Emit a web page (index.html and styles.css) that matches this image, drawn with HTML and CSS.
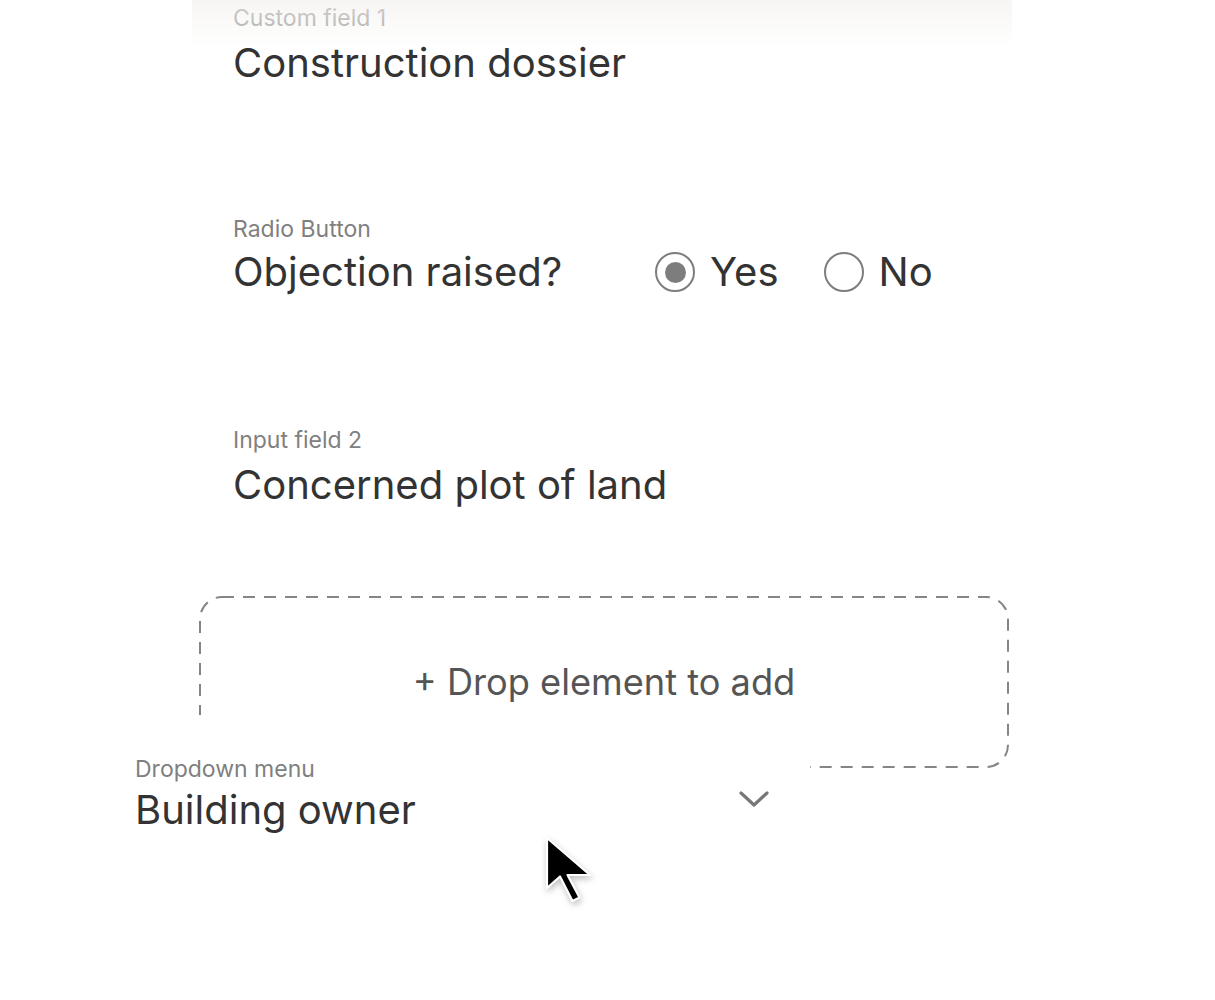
FILE: index.html
```html
<!DOCTYPE html>
<html>
<head>
<meta charset="utf-8">
<link rel="stylesheet" href="styles.css">
</head>
<body>
<div class="page">
  <div class="form">
    <div class="fade"></div>
    <div class="field">
      <div class="label label-faded">Custom field 1</div>
      <div class="value">Construction dossier</div>
    </div>
    <div class="field">
      <div class="label">Radio Button</div>
      <div class="radio-row">
        <div class="value question">Objection raised?</div>
        <div class="option"><span class="radio checked"></span><span class="value">Yes</span></div>
        <div class="option"><span class="radio"></span><span class="value">No</span></div>
      </div>
    </div>
    <div class="field">
      <div class="label">Input field 2</div>
      <div class="value">Concerned plot of land</div>
    </div>
    <div class="dropzone">
      <svg class="dash" width="810" height="172" viewBox="0 0 810 172"><rect x="1" y="1" width="808" height="170" rx="22" ry="22" fill="none" stroke="#858585" stroke-width="2" stroke-dasharray="12 9"/></svg>
      <span class="drop-text">+ Drop element to add</span>
    </div>
  </div>

  <div class="drag-card">
    <div class="label">Dropdown menu</div>
    <div class="drag-row">
      <div class="value">Building owner</div>
      <svg class="chevron" width="32" height="18" viewBox="0 0 32 18"><path d="M3 3 L16 15 L29 3" fill="none" stroke="#777" stroke-width="3.2" stroke-linecap="round" stroke-linejoin="round"/></svg>
    </div>
  </div>

  <svg class="cursor" width="52" height="72" viewBox="-4 -4 52 72">
    <path d="M0 0 L0 50 L13 38.5 L25.5 63 L32.5 59.5 L20.5 37 L43 37 Z" fill="#000" stroke="#fff" stroke-width="2.2" stroke-linejoin="round"/>
  </svg>
</div>
</body>
</html>
```
FILE: styles.css
```css
* { box-sizing: border-box; }
html, body { margin: 0; padding: 0; background: #fff; }
body {
  font-family: "Inter", "Liberation Sans", sans-serif;
  color: #333;
}
.page {
  position: relative;
  width: 1215px;
  height: 1000px;
  overflow: hidden;
}
.form {
  position: relative;
  width: 820px;
  margin-left: 192px;
  padding-top: 5px;
}
.fade {
  position: absolute;
  left: 0;
  top: 0;
  width: 820px;
  height: 48px;
  background: linear-gradient(to bottom, rgba(243,241,237,0.7) 0%, rgba(247,246,243,0.45) 55%, rgba(255,255,255,0) 100%);
  pointer-events: none;
}
.field {
  padding-left: 41px;
  height: 211px;
}
.label {
  font-size: 23px;
  line-height: 26px;
  color: #808080;
}
.label-faded { color: #8a8a8a; }
.value {
  font-size: 40px;
  line-height: 56px;
  margin-top: 4px;
  color: #333;
}
.radio-row {
  display: flex;
  align-items: center;
  margin-top: 2px;
}
.radio-row .value { margin-top: 0; }
.question { width: 422px; }
.option {
  display: flex;
  align-items: center;
  gap: 15px;
  margin-right: 45px;
}
.radio {
  width: 40px;
  height: 40px;
  border: 2px solid #7d7d7d;
  border-radius: 50%;
  display: flex;
  align-items: center;
  justify-content: center;
}
.radio.checked::after {
  content: "";
  width: 21px;
  height: 21px;
  border-radius: 50%;
  background: #7d7d7d;
}
.dropzone {
  position: relative;
  margin-top: -42px;
  margin-left: 7px;
  width: 810px;
  height: 172px;
  display: flex;
  align-items: center;
  justify-content: center;
}
.dash {
  position: absolute;
  left: 0;
  top: 0;
}
.drop-text {
  position: relative;
  font-size: 36.2px;
  color: #555;
  margin-left: 0;
}
.drag-card {
  position: absolute;
  left: 95px;
  top: 715px;
  width: 715px;
  height: 200px;
  background: #fff;
  padding: 41px 0 0 40px;
}
.drag-row {
  display: flex;
  align-items: center;
  width: 635px;
  justify-content: space-between;
}
.drag-row .value { margin-top: 0; }
.chevron { margin-top: -22px; }
.cursor {
  position: absolute;
  left: 543px;
  top: 834px;
  filter: drop-shadow(1px 3px 3px rgba(0,0,0,0.25));
}
```
